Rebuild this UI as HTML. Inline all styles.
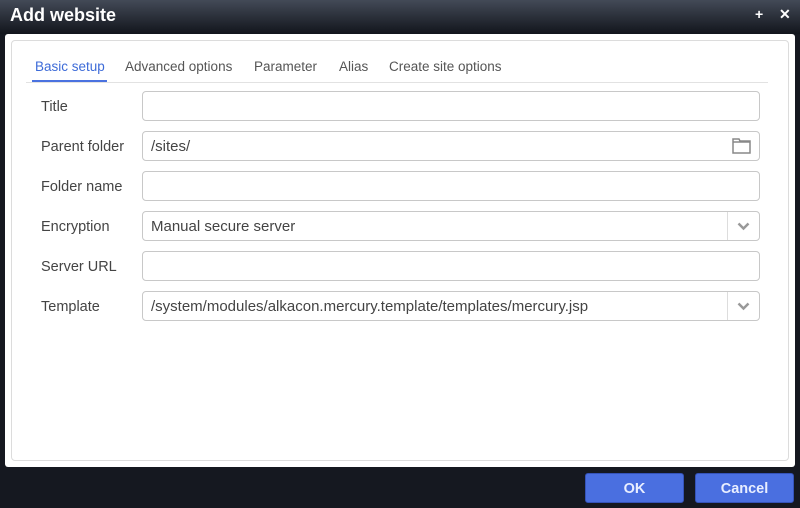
<!DOCTYPE html>
<html><head><style>
*{box-sizing:border-box;margin:0;padding:0}
body{width:800px;height:508px;overflow:hidden;background:#151820;font-family:"Liberation Sans",sans-serif;position:relative}
.top{position:absolute;left:0;top:0;width:800px;height:34px;background:linear-gradient(#434a57,#12151c);}
.title{position:absolute;left:10px;top:5px;color:#fff;font-weight:bold;font-size:18px}
.ic{position:absolute;top:6px;color:#fff;font-weight:bold;font-size:14px}
.body{position:absolute;left:5px;top:34px;width:790px;height:433px;background:#fff;border-radius:3px}
.panel{position:absolute;left:11px;top:40px;width:778px;height:421px;border:1px solid #dcdcdc;border-radius:4px;background:#fff}
.tabs{position:absolute;left:26px;top:82px;width:742px;height:1px;background:#e2e2e2}
.tab{position:absolute;top:59px;font-size:13.5px;color:#555}
.tab.a{color:#3d6bd8}
.ul{position:absolute;left:32px;top:80px;width:75px;height:2px;background:#4a72e0}
.lbl{position:absolute;left:41px;font-size:14.5px;color:#444}
.in{position:absolute;left:142px;width:618px;height:30px;border:1px solid #c8c8c8;border-radius:4px;font-size:15px;color:#444;padding:6px 0 0 8px}
.dd{position:absolute;right:0;top:0;width:32px;height:28px;border-left:1px solid #ddd}
.btn{position:absolute;top:473px;width:99px;height:30px;background:#4a6fe0;border:1px solid #3553b8;border-radius:3px;color:#e8eeff;font-weight:bold;font-size:14.5px;text-align:center;line-height:30px}
</style></head><body>
<div class="top"></div>
<div class="title">Add website</div>
<div class="ic" style="left:755px">+</div>
<div class="ic" style="left:779px">✕</div>
<div class="body"></div>
<div class="panel"></div>
<div class="tab a" style="left:35px">Basic setup</div>
<div class="tab" style="left:125px">Advanced options</div>
<div class="tab" style="left:254px">Parameter</div>
<div class="tab" style="left:339px">Alias</div>
<div class="tab" style="left:389px">Create site options</div>
<div class="tabs"></div>
<div class="ul"></div>

<div class="lbl" style="top:99px">Title</div>
<div class="in" style="top:91px"></div>
<div class="lbl" style="top:139px">Parent folder</div>
<div class="in" style="top:131px">/sites/<svg style="position:absolute;right:8px;top:6px" width="19" height="16" viewBox="0 0 19 16"><path d="M1 1h6l1 2h10v12H1z M1 4h17" fill="none" stroke="#888" stroke-width="1.5"/></svg></div>
<div class="lbl" style="top:179px">Folder name</div>
<div class="in" style="top:171px"></div>
<div class="lbl" style="top:219px">Encryption</div>
<div class="in" style="top:211px">Manual secure server<div class="dd"><svg style="position:absolute;left:9px;top:10px" width="13" height="9" viewBox="0 0 13 9"><path d="M1.5 1.5l5 5 5-5" fill="none" stroke="#999" stroke-width="2.5"/></svg></div></div>
<div class="lbl" style="top:259px">Server URL</div>
<div class="in" style="top:251px"></div>
<div class="lbl" style="top:299px">Template</div>
<div class="in" style="top:291px">/system/modules/alkacon.mercury.template/templates/mercury.jsp<div class="dd"><svg style="position:absolute;left:9px;top:10px" width="13" height="9" viewBox="0 0 13 9"><path d="M1.5 1.5l5 5 5-5" fill="none" stroke="#999" stroke-width="2.5"/></svg></div></div>

<div class="btn" style="left:585px">OK</div>
<div class="btn" style="left:695px">Cancel</div>
</body></html>
